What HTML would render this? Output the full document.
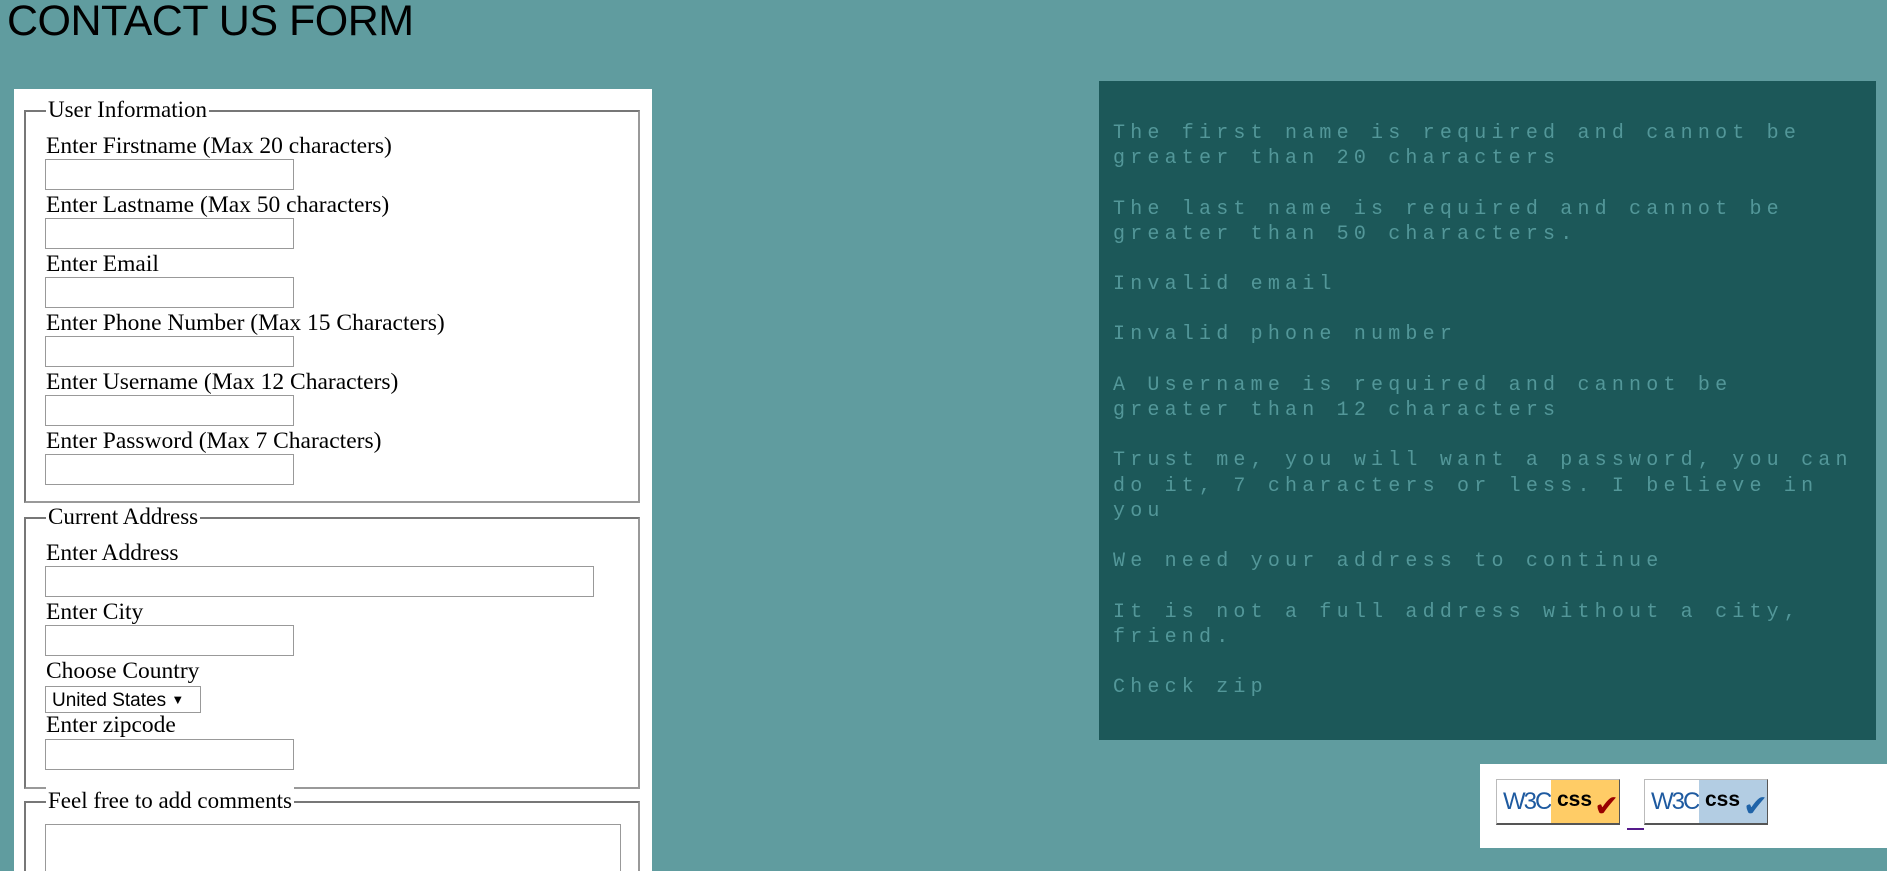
<!DOCTYPE html>
<html><head><meta charset="utf-8"><style>
html,body{margin:0;padding:0;width:1887px;height:871px;overflow:hidden;}
body{background:#609c9f;position:relative;font-family:"Liberation Serif",serif;color:#000;}
h1{position:absolute;left:7px;top:-3px;margin:0;font-family:"Liberation Sans",sans-serif;font-weight:normal;font-size:43px;letter-spacing:-0.5px;transform:scaleX(1.0);transform-origin:left;white-space:nowrap;}
.box{position:absolute;left:14px;top:89px;width:638px;height:782px;background:#fff;overflow:hidden;}
.fs{position:absolute;left:10px;width:616px;border:2px solid #777;border-right-color:#999;border-bottom-color:#999;box-sizing:border-box;}
.lg{position:absolute;left:32px;font-size:23px;line-height:28px;background:#fff;padding:0 2px;white-space:nowrap;}
.f{position:absolute;left:32px;font-size:23.5px;line-height:28px;white-space:nowrap;}
.in{position:absolute;left:31px;width:249px;height:31px;border:1px solid #999;box-sizing:border-box;}
.panel{position:absolute;left:1099px;top:81px;width:777px;height:659px;background:#1c5859;}
.panel p{margin:0 0 25px 0;width:750px;font-family:"Liberation Mono",monospace;font-size:20px;line-height:25.3px;letter-spacing:5.2px;color:#539799;}
.badges{position:absolute;left:1480px;top:764px;width:407px;height:84px;background:#fff;}
.b{position:absolute;top:15px;width:124px;height:46px;border:1px solid #bbb;border-right-color:#555;border-bottom:2px solid #555;box-sizing:border-box;white-space:nowrap;overflow:visible;}
.b .w{position:absolute;left:0;top:0;width:54px;height:43px;background:#fff;font-family:"Liberation Sans",sans-serif;color:#1e5aa0;font-size:24px;letter-spacing:-2px;line-height:43px;padding-left:6px;box-sizing:border-box;}
.b .c{position:absolute;left:54px;top:0;right:0;height:43px;font-family:"Liberation Sans",sans-serif;font-weight:bold;font-size:21px;line-height:40px;padding-left:6px;}
.ck{position:absolute;font-size:30px;line-height:30px;top:12px;}
</style></head><body>
<h1>CONTACT US FORM</h1>
<div class="box">
<div class="fs" style="top:21px;height:393px;"></div>
<div class="lg" style="top:7px">User Information</div>
<div class="f" style="top:43px">Enter Firstname (Max 20 characters)</div>
<div class="in" style="top:70px"></div>
<div class="f" style="top:102px">Enter Lastname (Max 50 characters)</div>
<div class="in" style="top:129px"></div>
<div class="f" style="top:161px">Enter Email</div>
<div class="in" style="top:188px"></div>
<div class="f" style="top:220px">Enter Phone Number (Max 15 Characters)</div>
<div class="in" style="top:247px"></div>
<div class="f" style="top:279px">Enter Username (Max 12 Characters)</div>
<div class="in" style="top:306px"></div>
<div class="f" style="top:338px">Enter Password (Max 7 Characters)</div>
<div class="in" style="top:365px"></div>

<div class="fs" style="top:428px;height:272px;"></div>
<div class="lg" style="top:414px">Current Address</div>
<div class="f" style="top:450px">Enter Address</div>
<div class="in" style="top:477px;width:549px"></div>
<div class="f" style="top:509px">Enter City</div>
<div class="in" style="top:536px"></div>
<div class="f" style="top:568px">Choose Country</div>
<div class="in" style="top:597px;width:156px;height:27px;font-family:'Liberation Sans',sans-serif;font-size:19px;line-height:25px;padding-left:6px;white-space:nowrap">United States <span style="font-size:13px;vertical-align:2px">▼</span></div>
<div class="f" style="top:622px">Enter zipcode</div>
<div class="in" style="top:650px"></div>

<div class="fs" style="top:712px;height:120px;"></div>
<div class="lg" style="top:698px">Feel free to add comments</div>
<div class="in" style="top:735px;width:576px;height:90px"></div>
</div>
<div class="panel"><div style="position:absolute;left:14px;top:40px">
<p>The first name is required and cannot be greater than 20 characters</p>
<p>The last name is required and cannot be greater than 50 characters.</p>
<p>Invalid email</p>
<p>Invalid phone number</p>
<p>A Username is required and cannot be greater than 12 characters</p>
<p>Trust me, you will want a password, you can do it, 7 characters or less. I believe in you</p>
<p>We need your address to continue</p>
<p>It is not a full address without a city, friend.</p>
<p>Check zip</p>
</div></div>
<div class="badges">
<div class="b" style="left:16px"><div class="w">W3C</div><div class="c" style="background:#fc6">css</div><span class="ck" style="left:97px;color:#900">✔</span></div>
<div style="position:absolute;left:147px;top:64px;width:17px;height:2px;background:#551a8b"></div>
<div class="b" style="left:164px"><div class="w">W3C</div><div class="c" style="background:#b3cde3">css</div><span class="ck" style="left:98px;color:#1f63a8">✔</span></div>
</div>
</body></html>
